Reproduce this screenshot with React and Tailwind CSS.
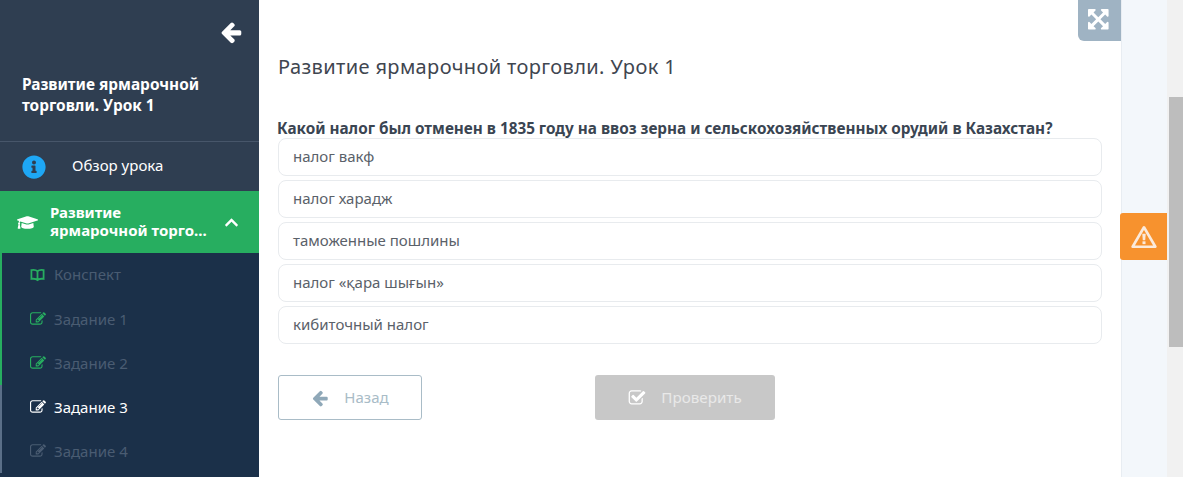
import React from 'react'
import { FaInfoCircle, FaGraduationCap, FaChevronUp } from 'react-icons/fa'

const ARROW_LEFT = 'M1664 896v128q0 53-32.5 90.5t-84.5 37.5h-704l293 294q38 36 38 90t-38 90l-75 76q-37 37-90 37-52 0-91-37l-651-652q-37-37-37-90 0-52 37-91l651-650q38-38 91-38 52 0 90 38l75 74q38 38 38 91t-38 91l-293 293h704q52 0 84.5 37.5t32.5 90.5z'
const EDIT = 'M888 1184l116-116-152-152-116 116v56h96v96h56zm440-720q-16-16-33 1l-350 350q-17 17-1 33t33-1l350-350q17-17 1-33zm80 594v190q0 119-84.5 203.5t-203.5 84.5h-832q-119 0-203.5-84.5t-84.5-203.5v-832q0-119 84.5-203.5t203.5-84.5h832q63 0 117 25 15 7 18 23 3 17-9 29l-49 49q-14 14-32 8-23-6-45-6h-832q-66 0-113 47t-47 113v832q0 66 47 113t113 47h832q66 0 113-47t47-113v-126q0-13 9-22l64-64q15-15 35-7t20 29zm-96-738l288 288-672 672h-288v-288zm444 132l-92 92-288-288 92-92q28-28 68-28t68 28l152 152q28 28 28 68t-28 68z'
const CHECK = 'M1472 930v318q0 119-84.5 203.5t-203.5 84.5h-832q-119 0-203.5-84.5t-84.5-203.5v-832q0-119 84.5-203.5t203.5-84.5h832q63 0 117 25 15 7 18 23 3 17-9 29l-49 49q-10 10-23 10-3 0-9-2-23-6-45-6h-832q-66 0-113 47t-47 113v832q0 66 47 113t113 47h832q66 0 113-47t47-113v-254q0-13 9-22l64-64q10-10 23-10 6 0 12 3 20 8 20 29zm231-489l-814 814q-24 24-57 24t-57-24l-430-430q-24-24-24-57t24-57l110-110q24-24 57-24t57 24l263 263 647-647q24-24 57-24t57 24l110 110q24 24 24 57t-24 57z'
const EXPAND = 'M1283 413l-355 355 355 355 144-144q29-31 70-14 39 17 39 59v448q0 26-19 45t-45 19h-448q-42 0-59-40-17-39 14-69l144-144-355-355-355 355 144 144q31 30 14 69-17 40-59 40h-448q-26 0-45-19t-19-45v-448q0-42 40-59 39-17 69 14l144 144 355-355-355-355-144 144q-19 19-45 19-12 0-24-5-40-17-40-59v-448q0-26 19-45t45-19h448q42 0 59 40 17 39-14 69l-144 144 355 355 355-355-144-144q-31-30-14-69 17-40 59-40h448q26 0 45 19t19 45v448q0 42-39 59-13 5-25 5-26 0-45-19z'

function Fa({ d, className }) {
  return (
    <svg viewBox="0 0 1792 1792" fill="currentColor" className={className}>
      <path d={d} />
    </svg>
  )
}

function BookOutline({ className }) {
  return (
    <svg viewBox="0 0 16 14" fill="none" stroke="currentColor" strokeWidth="1.9" className={className}>
      <path d="M8 3 C6.5 1.6 4 1.4 1.5 1.8 V11.2 C4 10.8 6.5 11 8 12.4 C9.5 11 12 10.8 14.5 11.2 V1.8 C12 1.4 9.5 1.6 8 3 Z M8 3 V12.4" />
    </svg>
  )
}

function WarningOutline({ className }) {
  return (
    <svg viewBox="0 0 24 22" className={className}>
      <path d="M12 2 L22.5 20 H1.5 Z" fill="none" stroke="currentColor" strokeWidth="2.4" strokeLinejoin="round" />
      <path d="M10.4 8 H13.6 L13.1 14 H10.9 Z" fill="currentColor" />
      <rect x="10.6" y="15" width="2.8" height="2.6" fill="currentColor" />
    </svg>
  )
}

const answers = ['налог вакф', 'налог харадж', 'таможенные пошлины', 'налог «қара шығын»', 'кибиточный налог']

const steps = [
  { label: 'Конспект', book: true, row: 'border-[#27ae60]', icon: 'text-[#27ae60]', text: 'text-[#4a5c72]' },
  { label: 'Задание 1', row: 'border-[#27ae60]', icon: 'text-[#27ae60]', text: 'text-[#4a5c72]' },
  { label: 'Задание 2', row: 'border-[#27ae60]', icon: 'text-[#27ae60]', text: 'text-[#4a5c72]' },
  { label: 'Задание 3', row: 'border-[#5b6f88]', icon: 'text-white', text: 'text-white' },
  { label: 'Задание 4', row: 'border-[#5b6f88]', icon: 'text-[#4a5c72]', text: 'text-[#4a5c72]' },
]

export default function App() {
  return (
    <div className="flex h-screen overflow-hidden bg-white font-['Noto_Sans','Open_Sans',sans-serif]">
      <aside className="w-[259px] shrink-0 bg-[#1b3049] flex flex-col">
        <div className="h-[142px] shrink-0 bg-[#2f3e51] border-b border-[#47566a] pl-[22px] pr-[16px] pt-[20px]">
          <div className="flex justify-end">
            <Fa d={ARROW_LEFT} className="text-white w-[24px] h-[24px]" />
          </div>
          <h2 className="mt-[30px] w-[200px] text-[15.4px] leading-[21px] font-bold text-white">Развитие ярмарочной торговли. Урок 1</h2>
        </div>
        <div className="h-[49px] shrink-0 bg-[#2f3e51] flex items-center pl-[22px]">
          <FaInfoCircle className="text-[#1ea7f5] text-[24px]" />
          <span className="ml-[26px] mt-[-2px] text-[15px] text-white">Обзор урока</span>
        </div>
        <div className="h-[62px] shrink-0 bg-[#27ae60] flex items-center pl-[17px] pr-[20px] text-white">
          <FaGraduationCap className="text-[21px] shrink-0" />
          <span className="ml-[12px] mt-[-2px] w-[165px] text-[15px] leading-[18px] font-bold">
            Развитие<br />ярмарочной торго...
          </span>
          <FaChevronUp className="ml-auto text-[15px]" />
        </div>
        <ul>
          {steps.map(({ label, book, row, icon, text }) => (
            <li key={label} className={`h-[44px] flex items-center pl-[28px] border-l-2 ${row}`}>
              {book ? (
                <BookOutline className={`w-[15px] h-[14px] shrink-0 ${icon}`} />
              ) : (
                <Fa d={EDIT} className={`w-[16px] h-[16px] shrink-0 ${icon}`} />
              )}
              <span className={`${book ? 'ml-[9px] mt-[-2px]' : 'ml-[8px]'} text-[15px] ${text}`}>{label}</span>
            </li>
          ))}
        </ul>
      </aside>

      <main className="relative w-[862px] shrink-0 pl-[19px] pr-[19px] pt-[53px]">
        <button className="absolute top-0 right-0 w-[43px] h-[41px] bg-[#9fb3c3] rounded-bl-[6px] flex items-center justify-center">
          <Fa d={EXPAND} className="text-white w-[24px] h-[24px]" />
        </button>
        <h1 className="text-[20px] leading-[28px] tracking-[0.37px] text-[#3f4650]">Развитие ярмарочной торговли. Урок 1</h1>
        <p className="mt-[37px] ml-[-1px] text-[15.3px] leading-[21px] font-bold text-[#3a4552] whitespace-nowrap">
          Какой налог был отменен в 1835 году на ввоз зерна и сельскохозяйственных орудий в Казахстан?
        </p>
        <div className="mt-[-1px] flex flex-col gap-[4px]">
          {answers.map((a) => (
            <div key={a} className="h-[38px] flex items-center pl-[14px] pb-[2px] border border-[#e8ebee] rounded-[8px] text-[15px] text-[#5a6169]">
              {a}
            </div>
          ))}
        </div>
        <div className="mt-[31px] flex items-start">
          <button className="w-[144px] h-[45px] flex items-center justify-center border border-[#a9bcc7] rounded-[3px] text-[15px] text-[#a9bcc7]">
            <Fa d={ARROW_LEFT} className="w-[18px] h-[18px] text-[#8fa8b8]" />
            <span className="ml-[15px]">Назад</span>
          </button>
          <button className="ml-[173px] w-[180px] h-[45px] flex items-center justify-center rounded-[3px] bg-[#c8c8c8] text-[15.2px] text-[#e9e9e9]">
            <Fa d={CHECK} className="w-[18px] h-[18px] text-white" />
            <span className="ml-[15px]">Проверить</span>
          </button>
        </div>
      </main>

      <div className="relative w-[46px] shrink-0 bg-[#f3f7fb] border-l border-[#e8edf2]">
        <button className="absolute top-[213px] left-[-2px] w-[47px] h-[47px] bg-[#f7922e] rounded-l-[3px] flex items-center justify-center">
          <WarningOutline className="text-[#fbeadb] w-[26px] h-[24px]" />
        </button>
      </div>

      <div className="w-[16px] shrink-0 bg-[#f1f1f1] pt-[97px] pl-[2px]">
        <div className="h-[250px] bg-[#bdbdbd]" />
      </div>
    </div>
  )
}
